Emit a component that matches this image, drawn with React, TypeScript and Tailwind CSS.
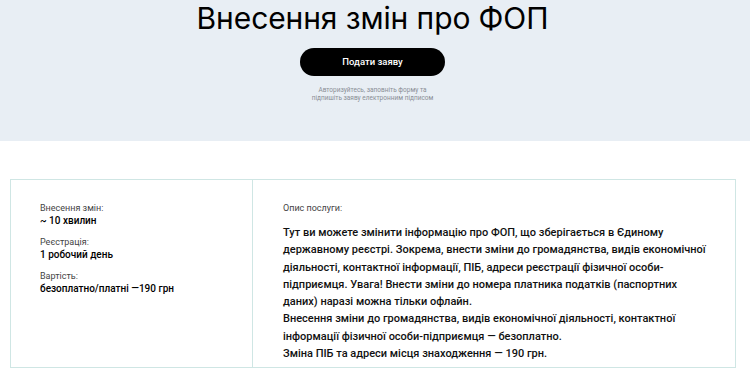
import React from "react";

export default function App() {
  return (
    <div className="w-[750px] h-[375px] overflow-hidden bg-white" style={{ fontFamily: "Roboto, 'Noto Sans', sans-serif" }}>
      <div className="h-[141px] bg-[#e8eef4] flex flex-col items-center pr-[5px]">
        <h1 className="text-[30px] leading-[34px] text-black mt-[1px] tracking-[-0.1px]" style={{ fontFamily: "Inter, sans-serif" }}>Внесення змін про ФОП</h1>
        <button className="mt-[13px] w-[145px] h-[28px] rounded-full bg-black text-white text-[9.5px] font-medium flex items-center justify-center">
          Подати заяву
        </button>
        <p className="mt-[10px] text-[6.5px] leading-[8px] text-[#8a8f96] text-center">
          Авторизуйтесь, заповніть форму та
          <br />
          підпишіть заяву електронним підписом
        </p>
      </div>
      <div className="mt-[38px] ml-[10px] w-[726px] h-[189px] border border-[#cfe6e4] flex">
        <div className="w-[242px] border-r border-[#cfe6e4] pl-[29px] pt-[22px] text-black">
          <div className="text-[9px] leading-[12px] text-[#444]">Внесення змін:</div>
          <div className="text-[10px] leading-[13px] font-medium">~ 10 хвилин</div>
          <div className="mt-[9px] text-[9px] leading-[12px] text-[#444]">Реєстрація:</div>
          <div className="text-[10px] leading-[13px] font-medium">1 робочий день</div>
          <div className="mt-[9px] text-[9px] leading-[12px] text-[#444]">Вартість:</div>
          <div className="text-[10px] leading-[13px] font-medium">безоплатно/платні —190 грн</div>
        </div>
        <div className="flex-1 pl-[30px] pr-[20px] pt-[22px] text-black">
          <div className="text-[9px] leading-[12px] text-[#444]">Опис послуги:</div>
          <p className="mt-[10px] w-[428px] text-[11px] leading-[17.3px] font-medium text-[#111]">
            Тут ви можете змінити інформацію про ФОП, що зберігається в Єдиному державному реєстрі. Зокрема, внести зміни до громадянства, видів економічної діяльності, контактної інформації, ПІБ, адреси реєстрації фізичної особи-підприємця. Увага! Внести зміни до номера платника податків (паспортних даних) наразі можна тільки офлайн.
            <br />
            Внесення зміни до громадянства, видів економічної діяльності, контактної інформації фізичної особи-підприємця — безоплатно.
            <br />
            Зміна ПІБ та адреси місця знаходження — 190 грн.
          </p>
        </div>
      </div>
    </div>
  );
}
